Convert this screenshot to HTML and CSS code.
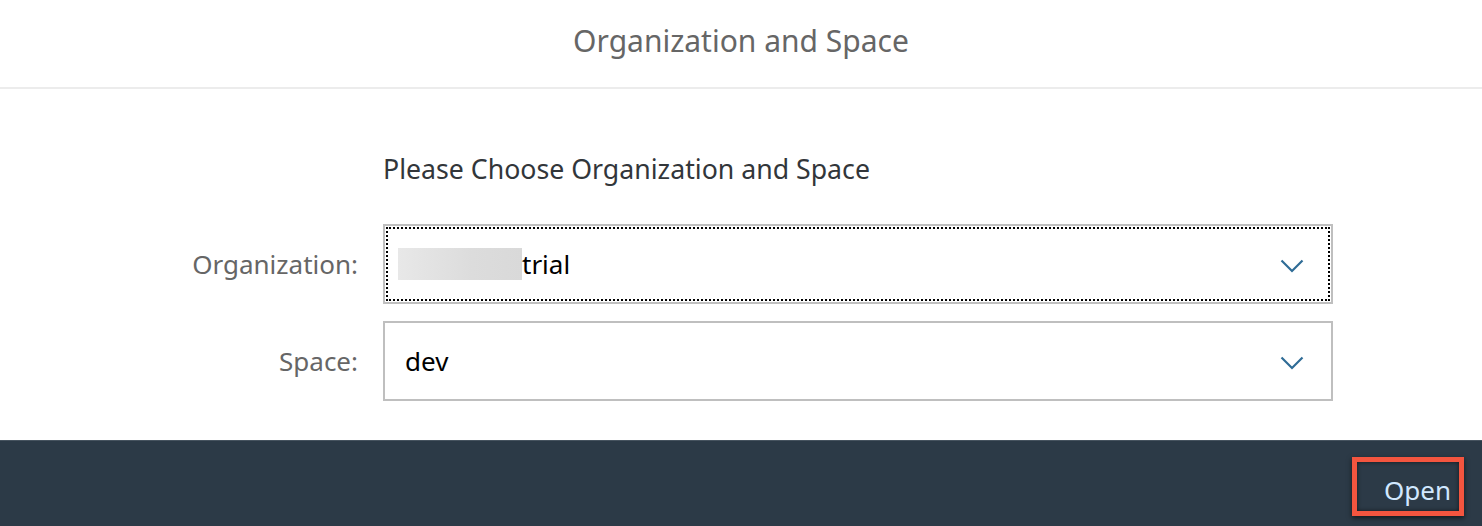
FILE: index.html
```html
<!DOCTYPE html>
<html lang="en">
<head>
<meta charset="utf-8">
<title>Organization and Space</title>
<link rel="stylesheet" href="styles.css">
</head>
<body>
<div class="dialog">
  <header class="dialog-header">
    <h1 class="dialog-title">Organization and Space</h1>
  </header>
  <main class="dialog-content">
    <form class="form-grid">
      <div class="subtitle">Please Choose Organization and Space</div>
      <label class="field-label">Organization:</label>
      <div class="select select-focused">
        <span class="select-value"><span class="blurred"></span>trial</span>
        <svg class="chevron" width="24" height="14" viewBox="0 0 24 14"><path d="M1.5 1.5 L12 12 L22.5 1.5" fill="none" stroke="#2f6c96" stroke-width="2.2"/></svg>
      </div>
      <label class="field-label">Space:</label>
      <div class="select">
        <span class="select-value value-plain">dev</span>
        <svg class="chevron" width="24" height="14" viewBox="0 0 24 14"><path d="M1.5 1.5 L12 12 L22.5 1.5" fill="none" stroke="#2f6c96" stroke-width="2.2"/></svg>
      </div>
    </form>
  </main>
  <footer class="dialog-footer">
    <button class="open-btn" type="button">Open</button>
  </footer>
</div>
</body>
</html>
```
FILE: styles.css
```css
html, body {
  margin: 0;
  padding: 0;
  background: #ffffff;
}
body {
  font-family: "Noto Sans", "Open Sans", sans-serif;
}
.dialog {
  width: 1482px;
  height: 526px;
  display: flex;
  flex-direction: column;
}
.dialog-header {
  border-bottom: 2px solid #ececec;
  display: flex;
  align-items: center;
  justify-content: center;
  box-sizing: border-box;
  height: 89px;
}
.dialog-title {
  margin: 0;
  font-weight: 400;
  font-size: 30px;
  color: #666666;
  padding-bottom: 6px;
}
.dialog-content {
  flex: 1;
  padding-top: 63px;
  box-sizing: border-box;
}
.form-grid {
  display: grid;
  grid-template-columns: 358px 950px;
  column-gap: 25px;
  row-gap: 17px;
  align-items: center;
  margin: 0;
}
.subtitle {
  grid-column: 2;
  font-size: 26.7px;
  color: #32363a;
  line-height: 34px;
  margin-bottom: 21px;
}
.field-label {
  text-align: right;
  font-size: 26px;
  color: #666666;
}
.select {
  height: 80px;
  box-sizing: border-box;
  border: 2px solid #bfbfbf;
  display: flex;
  align-items: center;
  justify-content: space-between;
  padding-right: 27px;
  position: relative;
}
.select-focused::after {
  content: "";
  position: absolute;
  inset: 1px;
  border: 2px dotted #000;
  pointer-events: none;
}
.select-value {
  display: flex;
  align-items: center;
  font-size: 26px;
  color: #000000;
  padding-left: 13px;
}
.value-plain {
  padding-left: 20px;
}
.blurred {
  display: inline-block;
  width: 124px;
  height: 32px;
  background: linear-gradient(90deg, #e8e8e8, #dcdcdc 60%, #d9d9d9);
}
.chevron {
  display: block;
  margin-top: 4px;
}
.dialog-footer {
  height: 86px;
  background: #2c3a47;
  border-top: 1px solid #46535f;
  box-sizing: border-box;
  display: flex;
  justify-content: flex-end;
  align-items: flex-start;
  padding-top: 16px;
  padding-right: 18px;
}
.open-btn {
  width: 112px;
  height: 59px;
  box-sizing: border-box;
  border: 5px solid #f4553f;
  background: transparent;
  box-shadow: 0 2px 5px rgba(0,0,0,0.6), inset 0 0 4px rgba(0,0,0,0.6);
  color: #d1e8ff;
  font-family: "Noto Sans", "Open Sans", sans-serif;
  font-size: 26px;
  text-align: right;
  padding: 6px 8px 0 0;
}
```
